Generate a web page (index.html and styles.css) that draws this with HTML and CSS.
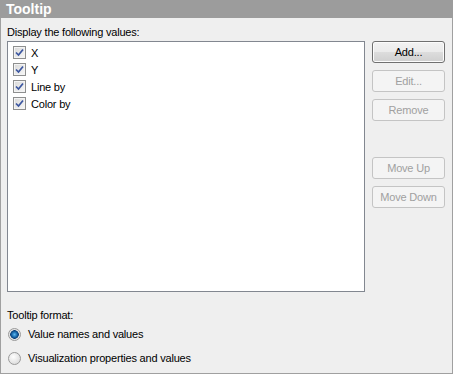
FILE: index.html
```html
<!DOCTYPE html>
<html lang="en">
<head>
  <meta charset="UTF-8">
  <title>Tooltip</title>
  <link rel="stylesheet" href="styles.css">
</head>
<body>
  <div class="panel">
    <div class="header">Tooltip</div>
    <div class="content">
      <div class="caption">Display the following values:</div>
      <div class="main">
        <div class="list">
          <div class="item"><span class="cb"><svg width="11" height="11" viewBox="0 0 11 11"><path d="M2 5.5 L4.5 8 L9 2.5" /></svg></span>X</div>
          <div class="item"><span class="cb"><svg width="11" height="11" viewBox="0 0 11 11"><path d="M2 5.5 L4.5 8 L9 2.5" /></svg></span>Y</div>
          <div class="item"><span class="cb"><svg width="11" height="11" viewBox="0 0 11 11"><path d="M2 5.5 L4.5 8 L9 2.5" /></svg></span>Line by</div>
          <div class="item"><span class="cb"><svg width="11" height="11" viewBox="0 0 11 11"><path d="M2 5.5 L4.5 8 L9 2.5" /></svg></span>Color by</div>
        </div>
        <div class="buttons">
          <button class="btn default">Add...</button>
          <button class="btn" disabled>Edit...</button>
          <button class="btn" disabled>Remove</button>
          <div class="spacer"></div>
          <button class="btn" disabled>Move Up</button>
          <button class="btn" disabled>Move Down</button>
        </div>
      </div>
      <div class="caption format">Tooltip format:</div>
      <div class="radio"><span class="rb checked"></span>Value names and values</div>
      <div class="radio"><span class="rb"></span>Visualization properties and values</div>
    </div>
  </div>
</body>
</html>
```

FILE: styles.css
```css
body {
  margin: 0;
  font-family: 'Liberation Sans', Arial, sans-serif;
  font-size: 11px;
  letter-spacing: -0.2px;
  color: #000;
}
/* Outer dialog panel */
.panel {
  width: 453px;
  height: 374px;
  box-sizing: border-box;
  background: #efefef;
  border: 1px solid #a0a0a0;
  border-top: none;
}
.header {
  height: 18px;
  margin: 0 -1px;
  padding-left: 6px;
  background: #9c9c9c;
  color: #fff;
  font-weight: bold;
  font-size: 14px;
  letter-spacing: 0;
  line-height: 18px;
}
.content {
  padding: 8px 7px 0 6px;
}
.caption {
  line-height: 13px;
  margin-bottom: 2px;
}
.main {
  display: flex;
  gap: 7px;
}
/* Checked list of values */
.list {
  width: 358px;
  height: 251px;
  box-sizing: border-box;
  background: #fff;
  border: 1px solid #828790;
  padding: 2px 0 0 5px;
}
.item {
  display: flex;
  align-items: center;
  gap: 5px;
  height: 17px;
}
.cb {
  width: 13px;
  height: 13px;
  box-sizing: border-box;
  border: 1px solid #8e8f8f;
  background: linear-gradient(135deg, #d8d8d8, #f8f8f8);
  box-shadow: inset 0 0 0 1px #f4f4f4;
  display: flex;
  align-items: center;
  justify-content: center;
}
.cb path {
  fill: none;
  stroke: #3b56a0;
  stroke-width: 1.7;
}
/* Side buttons */
.buttons {
  display: flex;
  flex-direction: column;
  gap: 7px;
  width: 73px;
}
.spacer {
  height: 22px;
}
.btn {
  height: 22px;
  padding: 0;
  font-family: inherit;
  font-size: 11px;
  letter-spacing: -0.2px;
  border-radius: 3px;
  border: 1px solid #c4c4c4;
  background: #f4f4f4;
  color: #a0a0a0;
}
.btn.default {
  border-color: #707070;
  background: linear-gradient(#f2f2f2 0%, #ebebeb 50%, #dddddd 51%, #cfcfcf 100%);
  box-shadow: inset 0 0 0 1px #fcfcfc;
  color: #000;
}
/* Tooltip format radios */
.format {
  margin-top: 17px;
  margin-bottom: 0;
}
.radio {
  display: flex;
  align-items: center;
  gap: 7px;
  height: 24px;
  padding-left: 1px;
}
.rb {
  width: 13px;
  height: 13px;
  box-sizing: border-box;
  border-radius: 50%;
  border: 1px solid #9a9a9a;
  background: radial-gradient(circle at 40% 35%, #fefefe, #e0e0e0 70%, #cfcfcf);
}
.rb.checked {
  background: radial-gradient(circle, #5fb8f0 0, #1a6cb0 2.5px, #0c3f78 4px, #e8e8e8 4.6px, #d0d0d0 100%);
}
```
